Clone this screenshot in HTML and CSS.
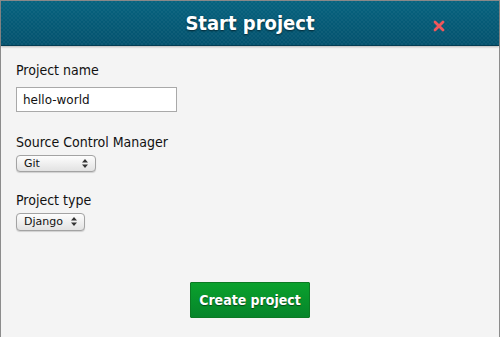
FILE: index.html
```html
<!DOCTYPE html>
<html lang="en">

<head>
    <meta charset="UTF-8">
    <meta name="viewport" content="width=device-width, initial-scale=1.0">
    <title>Start project</title>
    <link rel="stylesheet" href="styles.css">
</head>

<body>
    <div class="dialog">

        <div class="dialog_header">
            <h1>Start project</h1>
            <a href="#" class="close">
                <svg width="12" height="12" viewBox="0 0 12 12">
                    <path d="M2 2 L10 10 M10 2 L2 10" stroke="#f0575b" stroke-width="2.8" stroke-linecap="round" />
                </svg>
            </a>
        </div>

        <form class="dialog_body" action="/projects/new" method="POST">
            <div class="field field_name">
                <label for="name">Project name</label>
                <input type="text" id="name" name="name" value="hello-world" class="text_input">
            </div>

            <div class="field">
                <label for="scm">Source Control Manager</label>
                <select id="scm" name="scm" class="select select_scm">
                    <option>Git</option>
                    <option>Mercurial</option>
                </select>
            </div>

            <div class="field">
                <label for="type">Project type</label>
                <select id="type" name="type" class="select select_type">
                    <option>Django</option>
                    <option>Flask</option>
                </select>
            </div>

            <div class="actions">
                <button type="submit" class="btn">Create project</button>
            </div>
        </form>

    </div>
</body>

</html>
```

FILE: styles.css
```css
body {
    margin: 0;
    font-family: "DejaVu Sans Condensed", "DejaVu Sans", sans-serif;
    background-color: #f4f4f4;
}

.dialog {
    width: 500px;
    height: 337px;
    box-sizing: border-box;
    border: 1px solid #8c8c8c;
    border-bottom: none;
    background-color: #f4f4f4;
}

.dialog_header {
    height: 44px;
    display: flex;
    align-items: center;
    justify-content: center;
    position: relative;
    background-color: #055a79;
    background-image:
        repeating-conic-gradient(rgba(255, 255, 255, 0.04) 0 25%, transparent 0 50%),
        linear-gradient(#06637f, #04526e);
    background-size: 4px 4px, 100% 100%;
    border-bottom: 1px solid #033c52;
    box-shadow: 0 1px 2px rgba(0, 0, 0, 0.25);
}

.dialog_header h1 {
    margin: 0;
    color: white;
    font-size: 20px;
    font-weight: bold;
    text-shadow: 0 1px 2px rgba(0, 0, 0, 0.6);
}

.close {
    position: absolute;
    right: 54px;
    top: 19px;
    display: block;
    line-height: 0;
}

.dialog_body {
    padding: 16px 15px 0;
    height: 275px;
    display: flex;
    flex-direction: column;
}

.field {
    margin-bottom: 20px;
}

.field_name {
    margin-bottom: 22px;
}

.field label {
    display: block;
    font-size: 14px;
    color: #111;
    margin-bottom: 2px;
}

.field_name label {
    margin-bottom: 9px;
}

.text_input {
    width: 161px;
    height: 25px;
    box-sizing: border-box;
    border: 1px solid #a9a9a9;
    padding: 0 6px;
    font-family: "DejaVu Sans", sans-serif;
    font-size: 12px;
    color: #111;
    background: white;
}

.select {
    -webkit-appearance: none;
    appearance: none;
    height: 17px;
    box-sizing: border-box;
    border: 1px solid #a3a3a3;
    border-radius: 4px;
    padding: 0 0 0 7px;
    font-family: "DejaVu Sans", sans-serif;
    font-size: 11px;
    color: #111;
    background-color: #efefef;
    background-image: url("data:image/svg+xml;utf8,<svg xmlns='http://www.w3.org/2000/svg' width='6' height='9'><path d='M3 0 L6 3.5 H0 Z M3 9 L6 5.5 H0 Z' fill='%23333'/></svg>"), linear-gradient(#fdfdfd, #e2e2e2);
    background-repeat: no-repeat, no-repeat;
    background-position: right 7px center, 0 0;
    box-shadow: 0 1px 1px rgba(0, 0, 0, 0.15);
}

.select_scm {
    width: 80px;
}

.select_type {
    width: 69px;
    height: 18px;
}

.actions {
    margin-top: auto;
    display: flex;
    justify-content: center;
    padding-bottom: 19px;
}

.btn {
    width: 120px;
    height: 36px;
    border: 1px solid #0b7a23;
    border-radius: 1px;
    background: linear-gradient(#0aa12d, #06852a);
    color: white;
    font-family: inherit;
    font-size: 14px;
    font-weight: bold;
    white-space: nowrap;
    padding: 0;
    text-shadow: 0 1px 1px rgba(0, 0, 0, 0.5);
    cursor: pointer;
}
```
